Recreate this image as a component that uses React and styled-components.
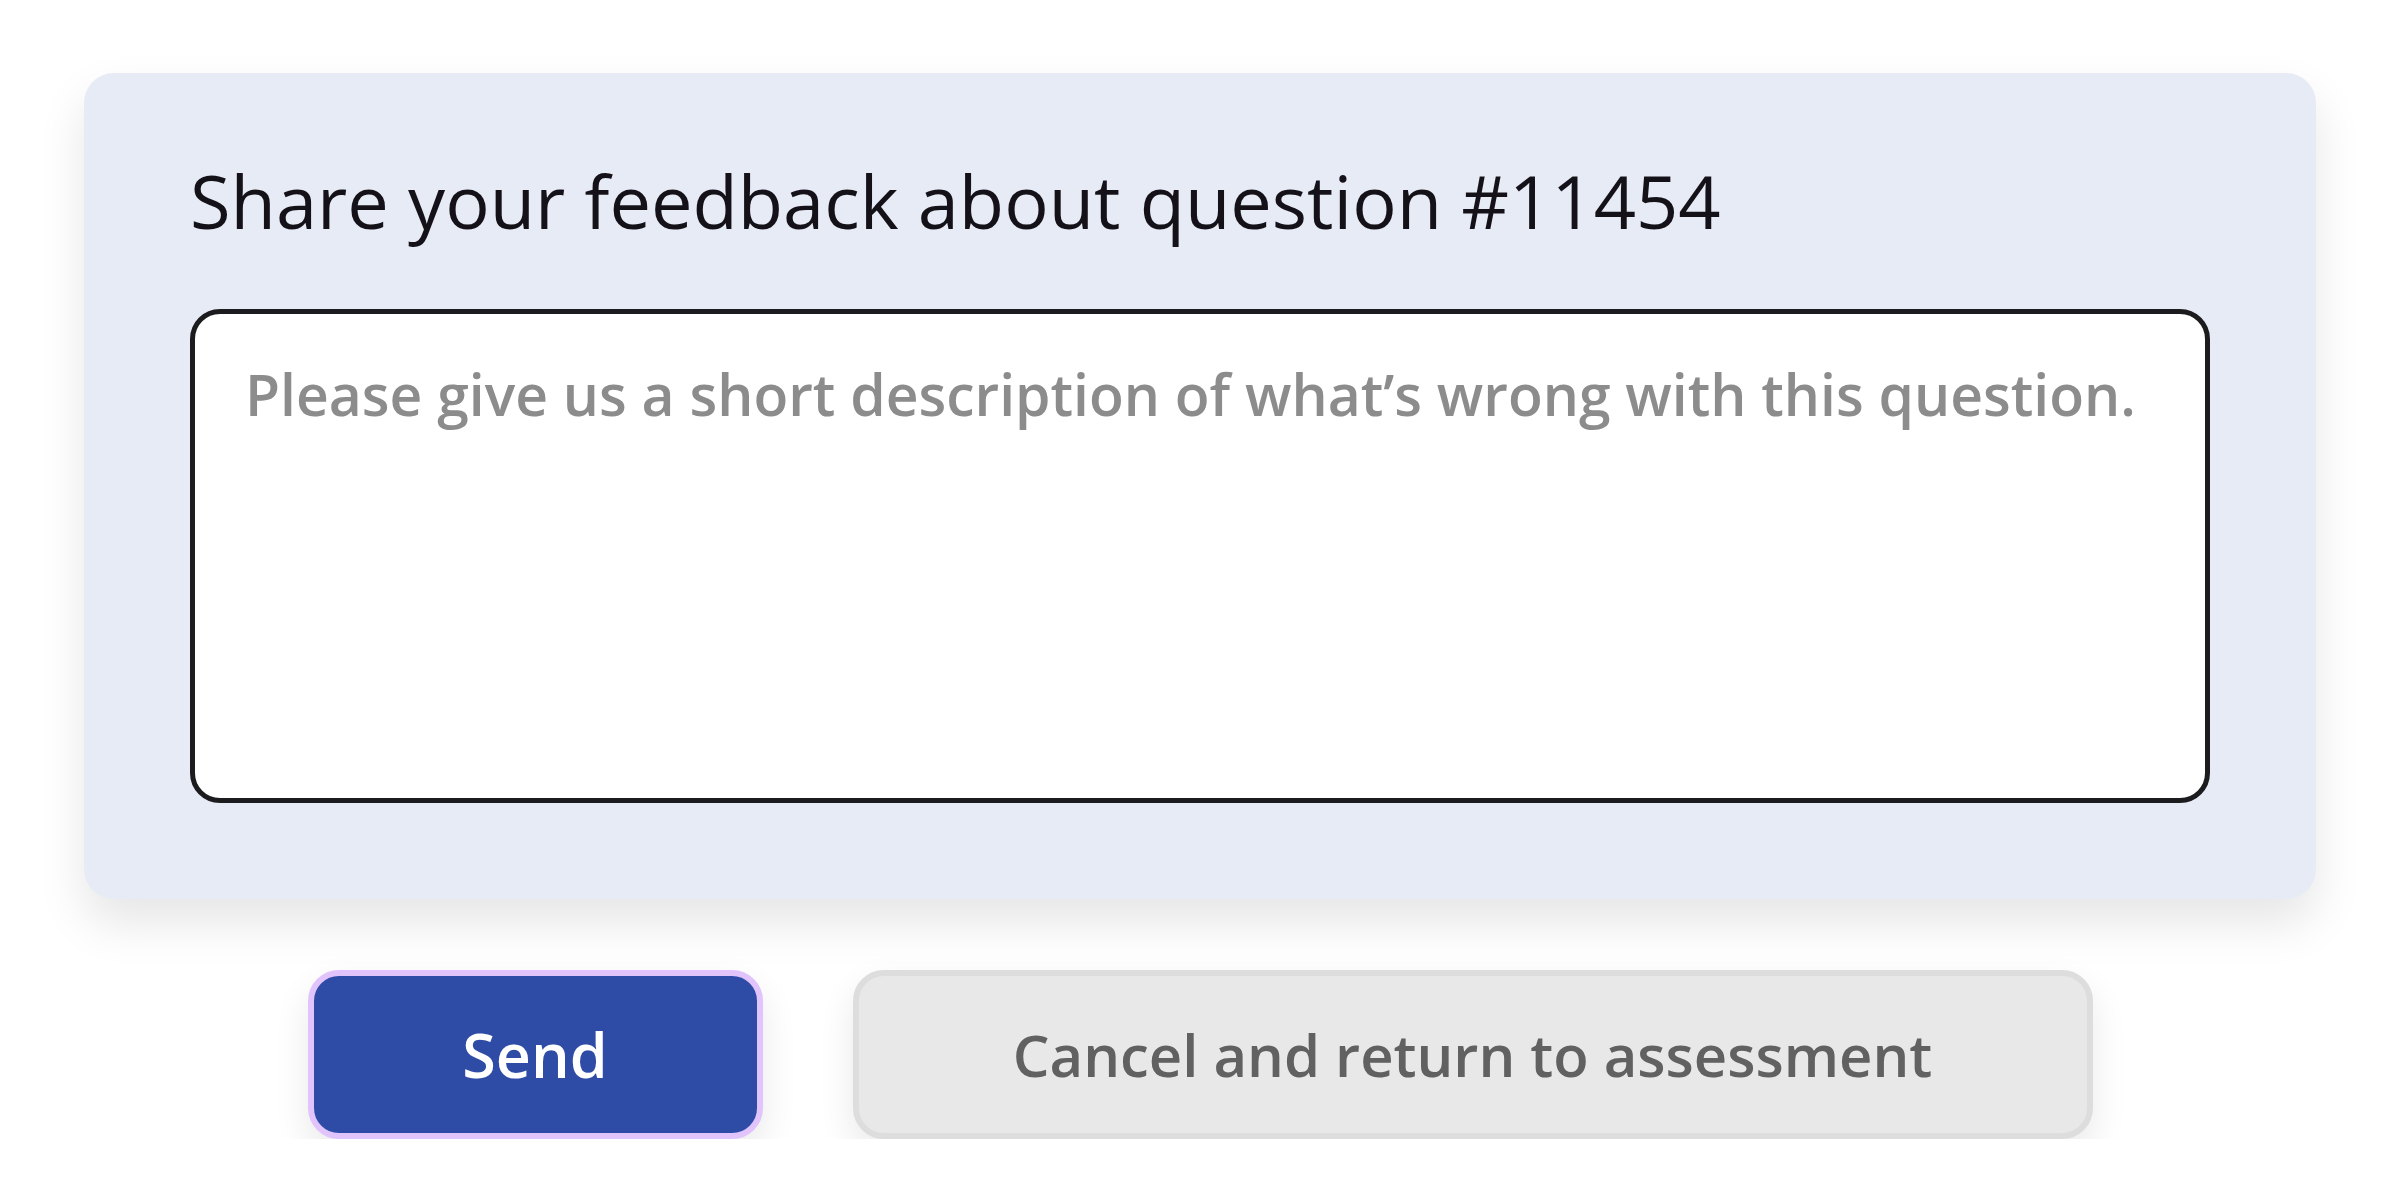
import React, { useState } from 'react';
import styled, { createGlobalStyle } from 'styled-components';

const GlobalStyle = createGlobalStyle`
  body {
    margin: 0;
    background: #ffffff;
    font-family: 'Open Sans', 'Noto Sans', sans-serif;
  }
`;

const Page = styled.main`
  padding: 73px 84px 0;
`;

const Card = styled.section`
  background: #e7ebf6;
  border-radius: 30px;
  padding: 84px 106px 96px;
  box-shadow: 0 24px 48px rgba(0, 0, 0, 0.1);
`;

const Title = styled.h2`
  margin: 0 0 63px;
  font-size: 74px;
  line-height: 1.2;
  font-weight: 400;
  color: #141218;
`;

const FeedbackField = styled.textarea`
  display: block;
  box-sizing: border-box;
  width: 100%;
  height: 494px;
  padding: 41px 50px;
  border: 5px solid #1c1c1f;
  border-radius: 30px;
  background: #ffffff;
  font-family: inherit;
  font-size: 57px;
  font-weight: 600;
  line-height: 1.4;
  color: #222;
  resize: none;
  outline: none;

  &::placeholder {
    color: #8c8c8c;
    opacity: 1;
  }
`;

const Actions = styled.div`
  display: flex;
  justify-content: center;
  gap: 90px;
  margin-top: 71px;
`;

const Button = styled.button`
  box-sizing: border-box;
  width: ${(p) => p.$width}px;
  height: 169px;
  border-radius: 31px;
  border: 6px solid ${(p) => (p.$primary ? '#e0c4fb' : '#dddddd')};
  background: ${(p) => (p.$primary ? '#2e4ca6' : '#e8e8e8')};
  color: ${(p) => (p.$primary ? '#ffffff' : '#616161')};
  font-family: inherit;
  font-size: ${(p) => (p.$primary ? 61 : 58)}px;
  font-weight: 600;
  cursor: pointer;
  box-shadow: 0 16px 36px rgba(0, 0, 0, 0.09);
`;

export default function App() {
  const [text, setText] = useState('');

  return (
    <>
      <GlobalStyle />
      <Page>
        <Card>
          <Title>Share your feedback about question #11454</Title>
          <FeedbackField
            value={text}
            onChange={(e) => setText(e.target.value)}
            placeholder="Please give us a short description of what’s wrong with this question."
          />
        </Card>
        <Actions>
          <Button $primary $width={455}>Send</Button>
          <Button $width={1240}>Cancel and return to assessment</Button>
        </Actions>
      </Page>
    </>
  );
}
